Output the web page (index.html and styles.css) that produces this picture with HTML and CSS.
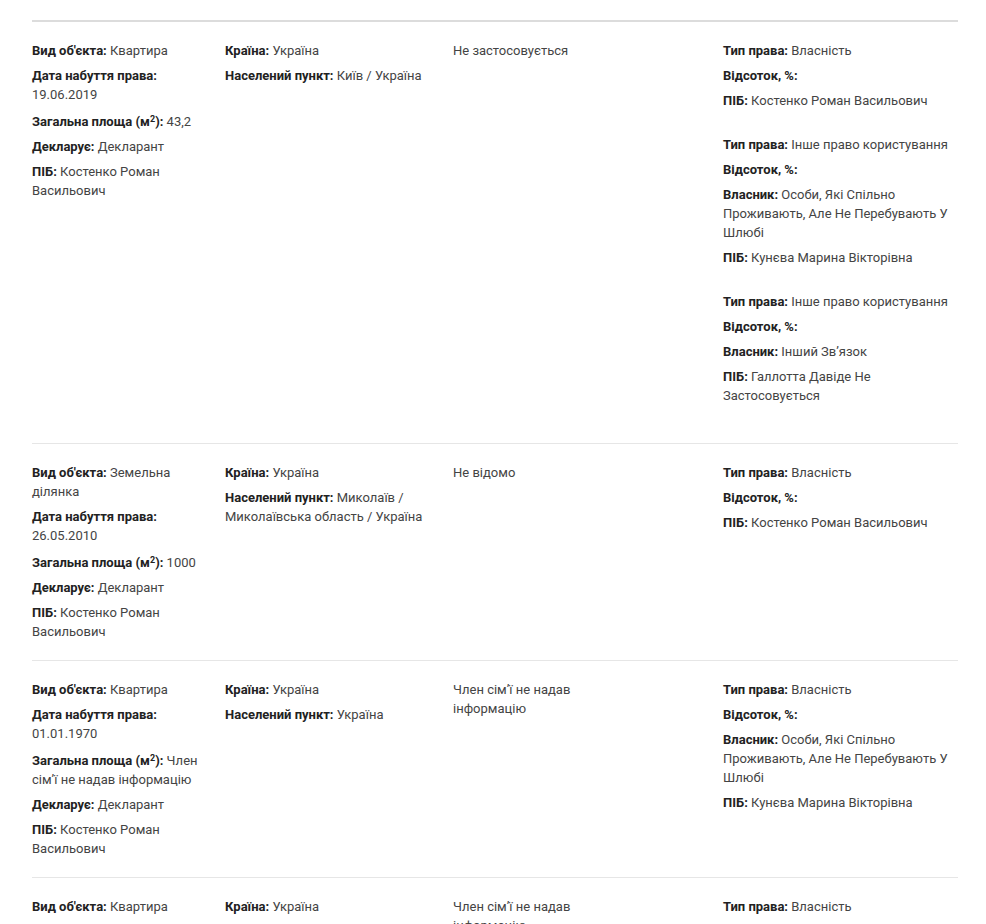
FILE: index.html
```html
<!DOCTYPE html>
<html lang="uk">
<head>
<meta charset="utf-8">
<title>Нерухоме майно</title>
<link rel="stylesheet" href="styles.css">
</head>
<body>
<div class="page">
  <div class="list">
    <div class="row">
      <div class="col c1">
        <div class="item"><b>Вид об'єкта:</b> Квартира</div>
        <div class="item"><b>Дата набуття права:</b> 19.06.2019</div>
        <div class="item"><b>Загальна площа (м<sup>2</sup>):</b> 43,2</div>
        <div class="item"><b>Декларує:</b> Декларант</div>
        <div class="item"><b>ПІБ:</b> Костенко Роман Васильович</div>
      </div>
      <div class="col c2">
        <div class="item"><b>Країна:</b> Україна</div>
        <div class="item"><b>Населений пункт:</b> Київ / Україна</div>
      </div>
      <div class="col c3">
        <div class="item">Не застосовується</div>
      </div>
      <div class="col c4">
        <div class="group">
          <div class="item"><b>Тип права:</b> Власність</div>
          <div class="item"><b>Відсоток, %:</b></div>
          <div class="item"><b>ПІБ:</b> Костенко Роман Васильович</div>
        </div>
        <div class="group">
          <div class="item"><b>Тип права:</b> Інше право користування</div>
          <div class="item"><b>Відсоток, %:</b></div>
          <div class="item"><b>Власник:</b> Особи, Які Спільно Проживають, Але Не Перебувають У Шлюбі</div>
          <div class="item"><b>ПІБ:</b> Кунєва Марина Вікторівна</div>
        </div>
        <div class="group">
          <div class="item"><b>Тип права:</b> Інше право користування</div>
          <div class="item"><b>Відсоток, %:</b></div>
          <div class="item"><b>Власник:</b> Інший Звʼязок</div>
          <div class="item"><b>ПІБ:</b> Галлотта Давіде Не Застосовується</div>
        </div>
      </div>
    </div>

    <div class="row">
      <div class="col c1">
        <div class="item"><b>Вид об'єкта:</b> Земельна ділянка</div>
        <div class="item"><b>Дата набуття права:</b> 26.05.2010</div>
        <div class="item"><b>Загальна площа (м<sup>2</sup>):</b> 1000</div>
        <div class="item"><b>Декларує:</b> Декларант</div>
        <div class="item"><b>ПІБ:</b> Костенко Роман Васильович</div>
      </div>
      <div class="col c2">
        <div class="item"><b>Країна:</b> Україна</div>
        <div class="item"><b>Населений пункт:</b> Миколаїв / Миколаївська область / Україна</div>
      </div>
      <div class="col c3">
        <div class="item">Не відомо</div>
      </div>
      <div class="col c4">
        <div class="group">
          <div class="item"><b>Тип права:</b> Власність</div>
          <div class="item"><b>Відсоток, %:</b></div>
          <div class="item"><b>ПІБ:</b> Костенко Роман Васильович</div>
        </div>
      </div>
    </div>

    <div class="row">
      <div class="col c1">
        <div class="item"><b>Вид об'єкта:</b> Квартира</div>
        <div class="item"><b>Дата набуття права:</b> 01.01.1970</div>
        <div class="item"><b>Загальна площа (м<sup>2</sup>):</b> Член сімʼї не надав інформацію</div>
        <div class="item"><b>Декларує:</b> Декларант</div>
        <div class="item"><b>ПІБ:</b> Костенко Роман Васильович</div>
      </div>
      <div class="col c2">
        <div class="item"><b>Країна:</b> Україна</div>
        <div class="item"><b>Населений пункт:</b> Україна</div>
      </div>
      <div class="col c3">
        <div class="item">Член сімʼї не надав інформацію</div>
      </div>
      <div class="col c4">
        <div class="group">
          <div class="item"><b>Тип права:</b> Власність</div>
          <div class="item"><b>Відсоток, %:</b></div>
          <div class="item"><b>Власник:</b> Особи, Які Спільно Проживають, Але Не Перебувають У Шлюбі</div>
          <div class="item"><b>ПІБ:</b> Кунєва Марина Вікторівна</div>
        </div>
      </div>
    </div>

    <div class="row">
      <div class="col c1">
        <div class="item"><b>Вид об'єкта:</b> Квартира</div>
        <div class="item"><b>Дата набуття права:</b> 01.01.1970</div>
        <div class="item"><b>Загальна площа (м<sup>2</sup>):</b> Член сімʼї не надав інформацію</div>
        <div class="item"><b>Декларує:</b> Декларант</div>
        <div class="item"><b>ПІБ:</b> Костенко Роман Васильович</div>
      </div>
      <div class="col c2">
        <div class="item"><b>Країна:</b> Україна</div>
        <div class="item"><b>Населений пункт:</b> Україна</div>
      </div>
      <div class="col c3">
        <div class="item">Член сімʼї не надав інформацію</div>
      </div>
      <div class="col c4">
        <div class="group">
          <div class="item"><b>Тип права:</b> Власність</div>
          <div class="item"><b>Відсоток, %:</b></div>
          <div class="item"><b>ПІБ:</b> Кунєва Марина Вікторівна</div>
        </div>
      </div>
    </div>
  </div>
</div>
</body>
</html>
```

FILE: styles.css
```css
* { box-sizing: border-box; }
html, body { margin: 0; padding: 0; background: #fff; }
body {
  font-family: Roboto, "Noto Sans", "Liberation Sans", sans-serif;
  font-size: 13px;
  line-height: 19px;
  color: #444;
}
.page {
  padding: 20px 28px 0 32px;
}
.list {
  border-top: 2px solid #dcdcdc;
}
.row {
  display: grid;
  grid-template-columns: 193px 228px 270px 1fr;
  padding: 19px 0 13px;
  border-bottom: 1px solid #e6e6e6;
}
.col { min-width: 0; }
.c1 { padding-right: 18px; }
.c2 { padding-right: 20px; }
.c3 { padding-right: 110px; }
.item { margin-bottom: 6px; }
.item b { font-weight: 700; color: #222; }
.group { margin-bottom: 25px; }
sup {
  font-size: 9px;
  line-height: inherit;
  vertical-align: 4px;
}
```
